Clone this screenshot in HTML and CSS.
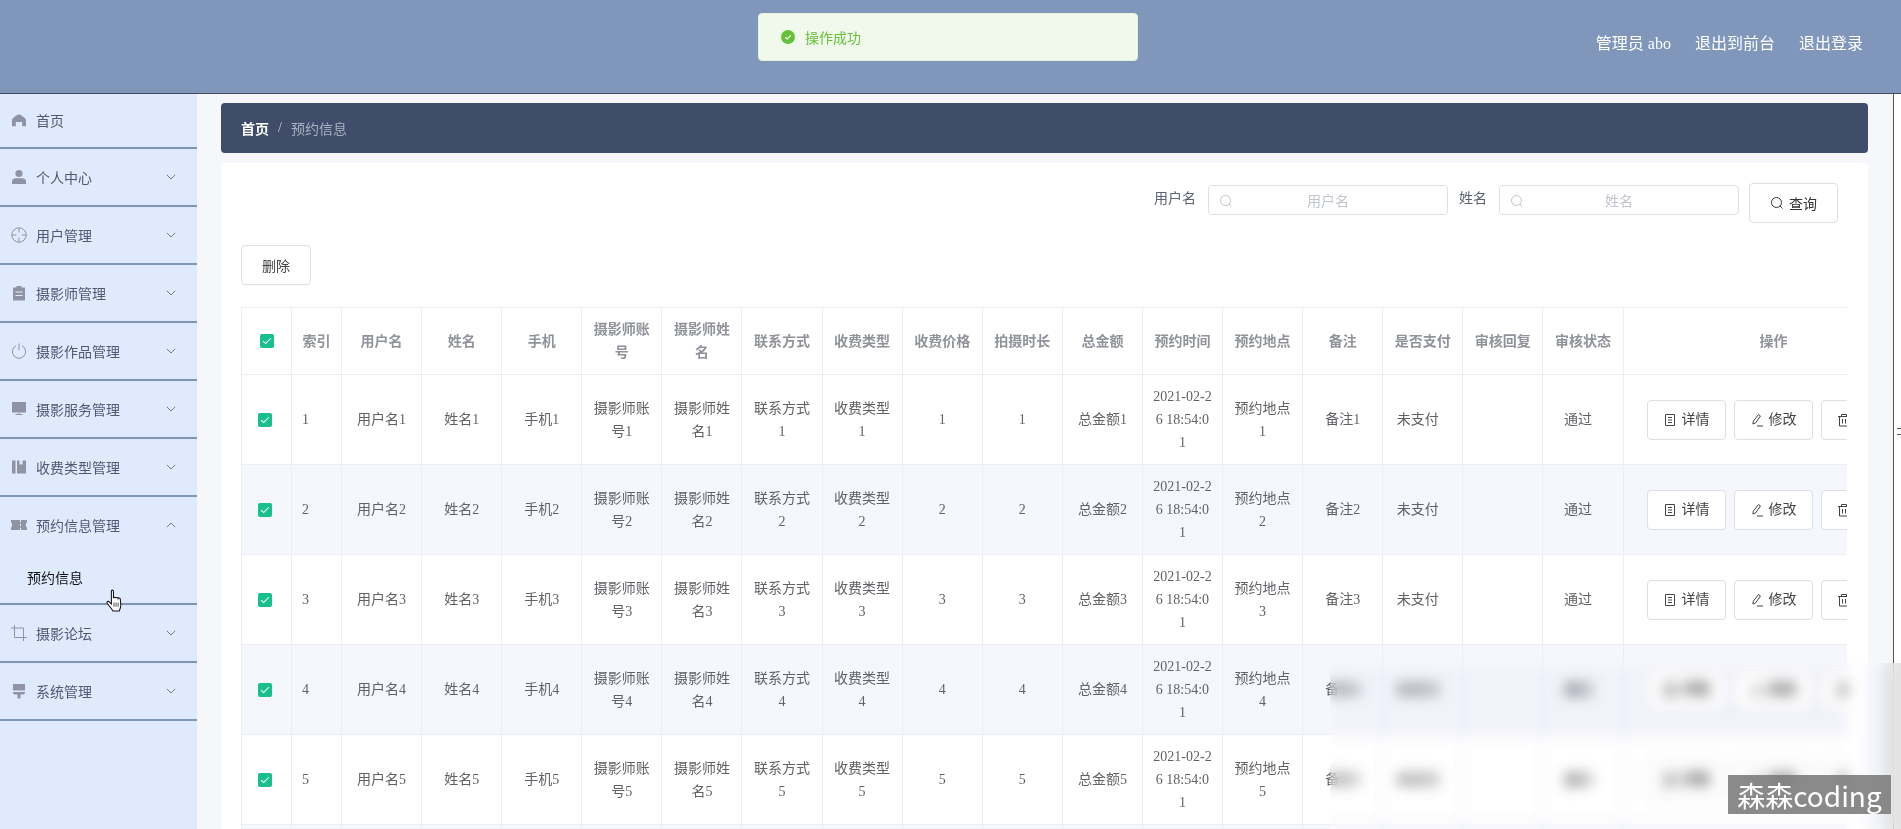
FILE: index.html
```html
<!DOCTYPE html>
<html lang="zh-CN">
<head>
    <meta charset="UTF-8">
    <meta name="viewport" content="width=device-width, initial-scale=1.0">
    <title>预约信息</title>
    <link rel="stylesheet" href="styles.css">
</head>
<body>

<svg class="defs" aria-hidden="true">
    <symbol id="i-down" viewBox="0 0 10 6"><path d="M.8.8 5 5 9.2.8" fill="none" stroke="currentColor"/></symbol>
    <symbol id="i-up" viewBox="0 0 10 6"><path d="M.8 5.2 5 1l4.2 4.2" fill="none" stroke="currentColor"/></symbol>
    <symbol id="i-search" viewBox="0 0 14 14"><circle cx="6.5" cy="6.5" r="5" fill="none" stroke="currentColor"/><path d="M10 10l2.5 2.5" stroke="currentColor"/></symbol>
    <symbol id="i-tickets" viewBox="0 0 14 14"><path d="M2.5 1.5h9v11h-9zM5 4.5h4M5 7h4M5 9.5h4" fill="none" stroke="currentColor"/></symbol>
    <symbol id="i-edit" viewBox="0 0 14 14"><path d="M8.5 1.5l2 1.5-5 7-2.6 1 .4-2.8zM7 13h6" fill="none" stroke="currentColor"/></symbol>
    <symbol id="i-delete" viewBox="0 0 14 14"><path d="M1 3.5h12M4.5 3.5V1.500h5v2M2.500 3.500v9.500h9V3.500M5.500 6v4.500M8.500 6v4.500" fill="none" stroke="currentColor"/></symbol>
</svg>

<header class="topbar">
    <span>管理员 abo</span>
    <a>退出到前台</a>
    <a>退出登录</a>
</header>

<div class="message">
    <svg class="message-icon" viewBox="0 0 14 14"><circle cx="7" cy="7" r="7" fill="#67c23a"/><path d="M4.2 7.2l2 1.8 3.6-3.600" fill="none" stroke="#fff" stroke-width="1.2"/></svg>
    <span>操作成功</span>
</div>

<div class="layout">
    <!-- Side menu -->
    <nav class="sidebar">
        <div class="menu-item first">
            <svg class="menu-icon" viewBox="0 0 16 16"><path d="M8 2.200c1 0 5.500 3.200 6.500 4.600.3.400.5.800.5 1.200v6.200h-3.800V10H4.800v4.200H1V8c0-.4.200-.8.500-1.200C2.500 5.400 7 2.200 8 2.200z" fill="currentColor"/></svg>
            <span>首页</span>
        </div>
        <div class="menu-item">
            <svg class="menu-icon" viewBox="0 0 16 16"><circle cx="8" cy="4.500" r="3.600" fill="currentColor"/><path d="M1 15v-2.500C1 10.500 2.500 9.200 4.500 9.200h7c2 0 3.500 1.300 3.500 3.300V15z" fill="currentColor"/></svg>
            <span>个人中心</span>
            <svg class="arrow"><use href="#i-down"/></svg>
        </div>
        <div class="menu-item">
            <svg class="menu-icon" viewBox="0 0 16 16"><circle cx="8" cy="8" r="7.200" fill="none" stroke="currentColor"/><path d="M8 .8v4.500M8 10.700v4.500M.8 8h4.500M10.700 8h4.500" stroke="currentColor"/></svg>
            <span>用户管理</span>
            <svg class="arrow"><use href="#i-down"/></svg>
        </div>
        <div class="menu-item">
            <svg class="menu-icon" viewBox="0 0 16 16"><path d="M5.500 1h5v1.500H14V15.500H2V2.500h3.500z" fill="currentColor"/><path d="M4.500 7h7M4.500 10.500h7" stroke="#dfeafe" stroke-width="1.200"/></svg>
            <span>摄影师管理</span>
            <svg class="arrow"><use href="#i-down"/></svg>
        </div>
        <div class="menu-item">
            <svg class="menu-icon" viewBox="0 0 16 16"><path d="M5 2.800a6.600 6.600 0 1 0 6 0M8 .5v6.500" fill="none" stroke="currentColor"/></svg>
            <span>摄影作品管理</span>
            <svg class="arrow"><use href="#i-down"/></svg>
        </div>
        <div class="menu-item">
            <svg class="menu-icon" viewBox="0 0 16 16"><path d="M1 1h14v10.500H1z" fill="currentColor"/><path d="M4.500 13.500h7" stroke="currentColor"/><path d="M7.500 11.500h1v2h-1z" fill="currentColor"/></svg>
            <span>摄影服务管理</span>
            <svg class="arrow"><use href="#i-down"/></svg>
        </div>
        <div class="menu-item">
            <svg class="menu-icon" viewBox="0 0 16 16"><path d="M1 1.500h3.500v13H1zM6 1.500h2.500V6l1.500-1 1.500 1V1.500H15v13H6z" fill="currentColor"/></svg>
            <span>收费类型管理</span>
            <svg class="arrow"><use href="#i-down"/></svg>
        </div>
        <div class="menu-item open">
            <svg class="menu-icon wide" viewBox="0 0 16 12"><path d="M0 1h16v2.500c-1.500.5-1.500 4.500 0 5V11H0V8.500c1.500-.5 1.500-4.500 0-5z" fill="currentColor"/><path d="M9.500 1v2.500M9.500 5v2M9.500 8.500V11" stroke="#dfeafe"/></svg>
            <span>预约信息管理</span>
            <svg class="arrow"><use href="#i-up"/></svg>
        </div>
        <div class="menu-sub">预约信息</div>
        <div class="menu-item">
            <svg class="menu-icon" viewBox="0 0 16 16"><path d="M3.500 0v12.500H16M0 3h12.500v13" fill="none" stroke="currentColor"/></svg>
            <span>摄影论坛</span>
            <svg class="arrow"><use href="#i-down"/></svg>
        </div>
        <div class="menu-item">
            <svg class="menu-icon" viewBox="0 0 16 16"><path d="M2 1h12v6.500H2zM1.500 9h13L13 11.500H9.500V15.500h-3V11.500H3z" fill="currentColor"/></svg>
            <span>系统管理</span>
            <svg class="arrow"><use href="#i-down"/></svg>
        </div>
    </nav>

    <main class="main">
        <div class="breadcrumb">
            <b>首页</b>
            <span class="sep">/</span>
            <span class="current">预约信息</span>
        </div>

        <section class="card">
            <!-- Search -->
            <form class="search">
                <label>用户名</label>
                <div class="search-input">
                    <svg class="search-icon"><use href="#i-search"/></svg>
                    <span>用户名</span>
                </div>
                <label>姓名</label>
                <div class="search-input">
                    <svg class="search-icon"><use href="#i-search"/></svg>
                    <span>姓名</span>
                </div>
                <button type="button" class="btn btn-search"><svg class="btn-icon"><use href="#i-search"/></svg>查询</button>
            </form>

            <button type="button" class="btn btn-remove">删除</button>

            <!-- Table -->
            <div class="table-wrap">
                <table class="grid">
                    <colgroup>
                        <col class="col-s"><col class="col-s">
                        <col class="col-m"><col class="col-m"><col class="col-m"><col class="col-m">
                        <col class="col-m"><col class="col-m"><col class="col-m"><col class="col-m">
                        <col class="col-m"><col class="col-m"><col class="col-m"><col class="col-m">
                        <col class="col-m"><col class="col-m"><col class="col-m"><col class="col-m">
                        <col class="col-l">
                    </colgroup>
                    <thead>
                        <tr>
                            <th><span class="check head"></span></th>
                            <th>索引</th><th>用户名</th><th>姓名</th><th>手机</th><th>摄影师账号</th><th>摄影师姓名</th>
                            <th>联系方式</th><th>收费类型</th><th>收费价格</th><th>拍摄时长</th><th>总金额</th>
                            <th>预约时间</th><th>预约地点</th><th>备注</th><th>是否支付</th><th>审核回复</th><th>审核状态</th>
                            <th>操作</th>
                        </tr>
                    </thead>
                    <tbody>
                        <tr>
                            <td><span class="check"></span></td>
                            <td class="left">1</td><td>用户名1</td><td>姓名1</td><td>手机1</td><td>摄影师账号1</td><td>摄影师姓名1</td>
                            <td>联系方式1</td><td>收费类型1</td><td>1</td><td>1</td><td>总金额1</td>
                            <td>2021-02-26 18:54:01</td><td>预约地点1</td><td>备注1</td><td class="nudge">未支付</td><td></td><td class="nudge">通过</td>
                            <td class="actions">
                                <button type="button" class="btn"><svg class="btn-icon"><use href="#i-tickets"/></svg>详情</button>
                                <button type="button" class="btn"><svg class="btn-icon"><use href="#i-edit"/></svg>修改</button>
                                <button type="button" class="btn"><svg class="btn-icon"><use href="#i-delete"/></svg>删除</button>
                            </td>
                        </tr>
                        <tr>
                            <td><span class="check"></span></td>
                            <td class="left">2</td><td>用户名2</td><td>姓名2</td><td>手机2</td><td>摄影师账号2</td><td>摄影师姓名2</td>
                            <td>联系方式2</td><td>收费类型2</td><td>2</td><td>2</td><td>总金额2</td>
                            <td>2021-02-26 18:54:01</td><td>预约地点2</td><td>备注2</td><td class="nudge">未支付</td><td></td><td class="nudge">通过</td>
                            <td class="actions">
                                <button type="button" class="btn"><svg class="btn-icon"><use href="#i-tickets"/></svg>详情</button>
                                <button type="button" class="btn"><svg class="btn-icon"><use href="#i-edit"/></svg>修改</button>
                                <button type="button" class="btn"><svg class="btn-icon"><use href="#i-delete"/></svg>删除</button>
                            </td>
                        </tr>
                        <tr>
                            <td><span class="check"></span></td>
                            <td class="left">3</td><td>用户名3</td><td>姓名3</td><td>手机3</td><td>摄影师账号3</td><td>摄影师姓名3</td>
                            <td>联系方式3</td><td>收费类型3</td><td>3</td><td>3</td><td>总金额3</td>
                            <td>2021-02-26 18:54:01</td><td>预约地点3</td><td>备注3</td><td class="nudge">未支付</td><td></td><td class="nudge">通过</td>
                            <td class="actions">
                                <button type="button" class="btn"><svg class="btn-icon"><use href="#i-tickets"/></svg>详情</button>
                                <button type="button" class="btn"><svg class="btn-icon"><use href="#i-edit"/></svg>修改</button>
                                <button type="button" class="btn"><svg class="btn-icon"><use href="#i-delete"/></svg>删除</button>
                            </td>
                        </tr>
                        <tr>
                            <td><span class="check"></span></td>
                            <td class="left">4</td><td>用户名4</td><td>姓名4</td><td>手机4</td><td>摄影师账号4</td><td>摄影师姓名4</td>
                            <td>联系方式4</td><td>收费类型4</td><td>4</td><td>4</td><td>总金额4</td>
                            <td>2021-02-26 18:54:01</td><td>预约地点4</td><td>备注4</td><td class="nudge">未支付</td><td></td><td class="nudge">通过</td>
                            <td class="actions">
                                <button type="button" class="btn"><svg class="btn-icon"><use href="#i-tickets"/></svg>详情</button>
                                <button type="button" class="btn"><svg class="btn-icon"><use href="#i-edit"/></svg>修改</button>
                                <button type="button" class="btn"><svg class="btn-icon"><use href="#i-delete"/></svg>删除</button>
                            </td>
                        </tr>
                        <tr>
                            <td><span class="check"></span></td>
                            <td class="left">5</td><td>用户名5</td><td>姓名5</td><td>手机5</td><td>摄影师账号5</td><td>摄影师姓名5</td>
                            <td>联系方式5</td><td>收费类型5</td><td>5</td><td>5</td><td>总金额5</td>
                            <td>2021-02-26 18:54:01</td><td>预约地点5</td><td>备注5</td><td class="nudge">未支付</td><td></td><td class="nudge">通过</td>
                            <td class="actions">
                                <button type="button" class="btn"><svg class="btn-icon"><use href="#i-tickets"/></svg>详情</button>
                                <button type="button" class="btn"><svg class="btn-icon"><use href="#i-edit"/></svg>修改</button>
                                <button type="button" class="btn"><svg class="btn-icon"><use href="#i-delete"/></svg>删除</button>
                            </td>
                        </tr>
                        <tr class="row-next">
                            <td></td><td></td><td></td><td></td><td></td><td></td><td></td><td></td><td></td><td></td>
                            <td></td><td></td><td></td><td></td><td></td><td></td><td></td><td></td><td></td>
                        </tr>
                    </tbody>
                </table>
            </div>
        </section>
    </main>

    <div class="splitter"><span class="grip"></span></div>
</div>

<!-- Things lying over the page -->
<svg class="cursor" viewBox="0 0 16 22"><path d="M5.500 1.500c1-1 2 0 2 .8v6.500c0-1 2-1.200 2.200 0 .2-1 2-1 2.200.2.300-.8 2-.6 2.100.6l.5 6c0 2-.5 3-1.500 5.500H7c-1-2-3-4-5.500-7.500-.8-1.500 1-2.300 2-1.200l2 2V2.300z" fill="#fff" stroke="#111" stroke-width="1"/><path d="M8 13v4M10 13v4M12 13v4" stroke="#111" stroke-width=".7"/></svg>
<div class="blur-patch"></div>
<div class="watermark">森森coding</div>

</body>
</html>
```

FILE: styles.css
```css
* {
    box-sizing: border-box;
}

html, body {
    height: 829px;
    margin: 0;
    overflow: hidden;
}

body {
    font-family: "Liberation Serif", "Noto Sans CJK SC", serif;
    font-size: 14px;
    color: #606266;
    background-color: #f5f7fb;
}

.defs {
    display: none;
}

/* top bar */
.topbar {
    height: 94px;
    padding: 0 38px 9px 0;
    display: flex;
    align-items: center;
    justify-content: flex-end;
    gap: 24px;
    font-size: 16px;
    color: #fff;
    background-color: #8196bb;
    border-bottom: 1px solid #3f4b63;
}

.message {
    position: absolute;
    left: 758px;
    top: 13px;
    width: 380px;
    height: 48px;
    padding: 0 0 1px 22px;
    display: flex;
    align-items: center;
    gap: 10px;
    color: #67c23a;
    background-color: #f0f9eb;
    border: 1px solid #e1f3d8;
    border-radius: 4px;
}

.message-icon {
    width: 14px;
    height: 14px;
}

.layout {
    display: flex;
    height: 735px;
}

/* side menu */
.sidebar {
    width: 197px;
    flex: none;
    background-color: #dfeafe;
}

.menu-item {
    height: 58px;
    padding: 0 21px 0 11px;
    display: flex;
    align-items: center;
    color: #4f5a70;
    border-bottom: 2px solid #7f95b5;
}

.menu-item.first {
    height: 55px;
    padding-bottom: 2px;
}

.menu-item.open {
    padding-bottom: 2px;
    border-bottom: none;
}

.menu-icon {
    width: 16px;
    height: 16px;
    margin-right: 9px;
    color: #8f93a3;
}

.menu-icon.wide {
    height: 12px;
}

.menu-item span {
    flex: 1;
}

.arrow {
    width: 10px;
    height: 6px;
    margin-top: -1px;
    color: #6f7a90;
}

.menu-sub {
    height: 50px;
    padding: 0 0 4px 27px;
    display: flex;
    align-items: center;
    color: #111;
    border-bottom: 2px solid #7f95b5;
}

/* content */
.main {
    flex: 1;
    min-width: 0;
    padding: 9px 25px 0 24px;
    display: flex;
    flex-direction: column;
    gap: 10px;
}

.breadcrumb {
    height: 50px;
    flex: none;
    padding: 0 0 1px 20px;
    display: flex;
    align-items: center;
    color: #fff;
    background-color: #3f4d6b;
    border-radius: 4px;
}

.breadcrumb .sep {
    margin: 0 9px;
    color: #c6cbd6;
}

.breadcrumb .current {
    color: #a9b2c2;
}

.card {
    flex: 1;
    min-height: 0;
    overflow: hidden;
    padding: 20px 21px 0 20px;
    background-color: #fff;
    border-radius: 4px 4px 0 0;
}

.search {
    display: flex;
    justify-content: flex-end;
    align-items: flex-start;
    padding-right: 9px;
}

.search label {
    margin: 4px 12px 0 0;
    color: #5c6270;
}

.search-input + label {
    margin-left: 1px;
}

.search-input {
    position: relative;
    width: 240px;
    height: 30px;
    margin: 2px 10px 0 0;
    padding-bottom: 1px;
    display: flex;
    align-items: center;
    justify-content: center;
    color: #c0c4cc;
    border: 1px solid #dcdfe6;
    border-radius: 4px;
}

.search-icon {
    position: absolute;
    left: 10px;
    top: 8px;
    width: 14px;
    height: 14px;
}

.btn {
    height: 40px;
    padding: 0 15px;
    display: inline-flex;
    align-items: center;
    justify-content: center;
    font: inherit;
    color: #444;
    background-color: #fff;
    border: 1px solid #dcdfe6;
    border-radius: 4px;
}

.btn-icon {
    width: 14px;
    height: 14px;
    margin-right: 5px;
}

.btn-search {
    width: 89px;
    color: #333;
}

.btn-remove {
    display: flex;
    width: 70px;
    margin: 22px 0;
}

/* table */
.table-wrap {
    overflow: hidden;
}

.grid {
    width: 1683px;
    table-layout: fixed;
    border-collapse: separate;
    border-spacing: 0;
    border-top: 1px solid #ebeef5;
    border-left: 1px solid #ebeef5;
    line-height: 23px;
}

.col-s {
    width: 50px;
}

.col-m {
    width: 80.1px;
}

.col-l {
    width: 301px;
}

.grid th, .grid td {
    padding: 10px;
    text-align: center;
    vertical-align: middle;
    word-break: break-all;
    border-right: 1px solid #ebeef5;
    border-bottom: 1px solid #ebeef5;
}

.grid th {
    font-weight: bold;
    color: #909399;
}

.grid td.left {
    text-align: left;
}

.grid td.nudge {
    padding-right: 20px;
}

.grid tbody tr:nth-child(even) td {
    background-color: #f6f7fc;
}

.grid .row-next td {
    height: 90px;
}

.grid td.actions {
    padding: 0 0 0 23px;
    text-align: left;
    white-space: nowrap;
}

.actions .btn {
    width: 79px;
    margin-right: 4.5px;
}

.check {
    display: inline-block;
    position: relative;
    top: 3px;
    left: -2px;
    width: 14px;
    height: 14px;
    background-color: #17c08e;
    border-radius: 2px;
}

.check.head {
    top: 2px;
    left: 0;
}

.check::after {
    content: "";
    position: absolute;
    left: 5px;
    top: 2px;
    width: 3px;
    height: 7px;
    border: solid #fff;
    border-width: 0 1px 1px 0;
    transform: rotate(45deg);
}

/* splitter at the right edge */
.splitter {
    width: 8px;
    flex: none;
    position: relative;
    background-color: #fff;
    border-left: 1px solid #555;
}

.grip {
    position: absolute;
    left: 3px;
    top: 334px;
    width: 4px;
    height: 7px;
    border-top: 1px solid #555;
    border-bottom: 1px solid #555;
}

/* overlays */
.cursor {
    position: absolute;
    left: 105px;
    top: 589px;
    width: 18px;
    height: 23px;
}

.blur-patch {
    position: absolute;
    left: 1330px;
    top: 663px;
    right: 0;
    bottom: 0;
    background: linear-gradient(to right, rgba(255, 255, 255, 0.3) 96%, rgba(225, 225, 225, 0.9));
    backdrop-filter: blur(7px) invert(1) brightness(2.2) invert(1);
}

.watermark {
    position: absolute;
    left: 1728px;
    top: 775px;
    width: 163px;
    height: 39px;
    display: flex;
    align-items: center;
    justify-content: center;
    font-family: "Noto Sans CJK SC", sans-serif;
    font-size: 28px;
    color: #fff;
    background-color: rgba(125, 125, 125, 0.9);
}
```
